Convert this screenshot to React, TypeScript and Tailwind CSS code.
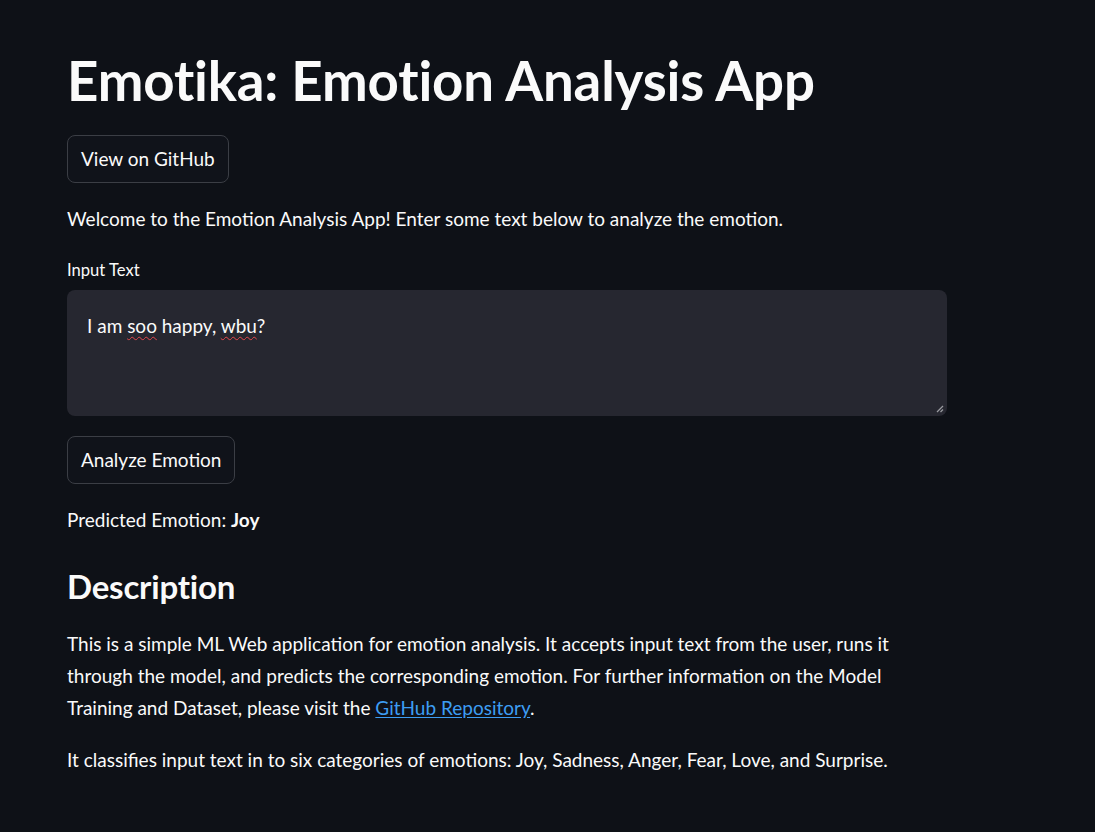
export default function App() {
    return (
        <div className="min-h-screen bg-[#0e1117] text-[#fafafa] font-['Lato',sans-serif]">
            <div className="w-[880px] ml-[67px] pb-10">
                {/* Title */}
                <h1 className="pt-[48px] text-[54.6px] leading-[1.2] font-bold tracking-[-0.15px]">
                    Emotika: Emotion Analysis App
                </h1>

                {/* GitHub button */}
                <button className="mt-[21px] h-[48px] px-[13px] rounded-lg border border-[#3b3e45] bg-[#10131a] text-[19px] leading-none">
                    View on GitHub
                </button>

                <p className="mt-[21px] text-[19px] leading-[30px]">
                    Welcome to the Emotion Analysis App! Enter some text below to analyze the emotion.
                </p>

                {/* Input */}
                <label className="block mt-[25px] text-[16.6px] leading-[22px]">Input Text</label>
                <div className="relative mt-[9px] h-[126px] rounded-lg bg-[#262730] px-[20px] pt-[21px] text-[19px] leading-[30px]">
                    I am <span className="underline decoration-wavy decoration-[#e5484d] decoration-[1.3px] underline-offset-[3px]">soo</span> happy,{' '}
                    <span className="underline decoration-wavy decoration-[#e5484d] decoration-[1.3px] underline-offset-[3px]">wbu</span>?
                    <svg className="absolute right-[3px] bottom-[3px]" width="9" height="9" viewBox="0 0 9 9">
                        <path d="M8 2 L2 8" stroke="#9a9ba0" strokeWidth="1.2" />
                        <path d="M8 5.5 L5.5 8" stroke="#9a9ba0" strokeWidth="1.2" />
                    </svg>
                </div>

                {/* Analyze button */}
                <button className="mt-[20px] h-[48px] px-[13px] rounded-lg border border-[#3b3e45] bg-[#10131a] text-[19px] leading-none">
                    Analyze Emotion
                </button>

                <p className="mt-[21px] text-[19px] leading-[30px]">
                    Predicted Emotion: <strong className="font-bold">Joy</strong>
                </p>

                {/* Description */}
                <h3 className="mt-[32px] text-[33px] leading-[1.2] font-bold tracking-[-0.2px]">Description</h3>

                <p className="mt-[22px] text-[19px] leading-[32px]">
                    This is a simple ML Web application for emotion analysis. It accepts input text from the user, runs it
                    through the model, and predicts the corresponding emotion. For further information on the Model
                    Training and Dataset, please visit the{' '}
                    <a href="#" className="text-[#3d9df3] underline underline-offset-2">GitHub Repository</a>.
                </p>

                <p className="mt-[20px] text-[19px] leading-[32px]">
                    It classifies input text in to six categories of emotions: Joy, Sadness, Anger, Fear, Love, and Surprise.
                </p>
            </div>
        </div>
    );
}
